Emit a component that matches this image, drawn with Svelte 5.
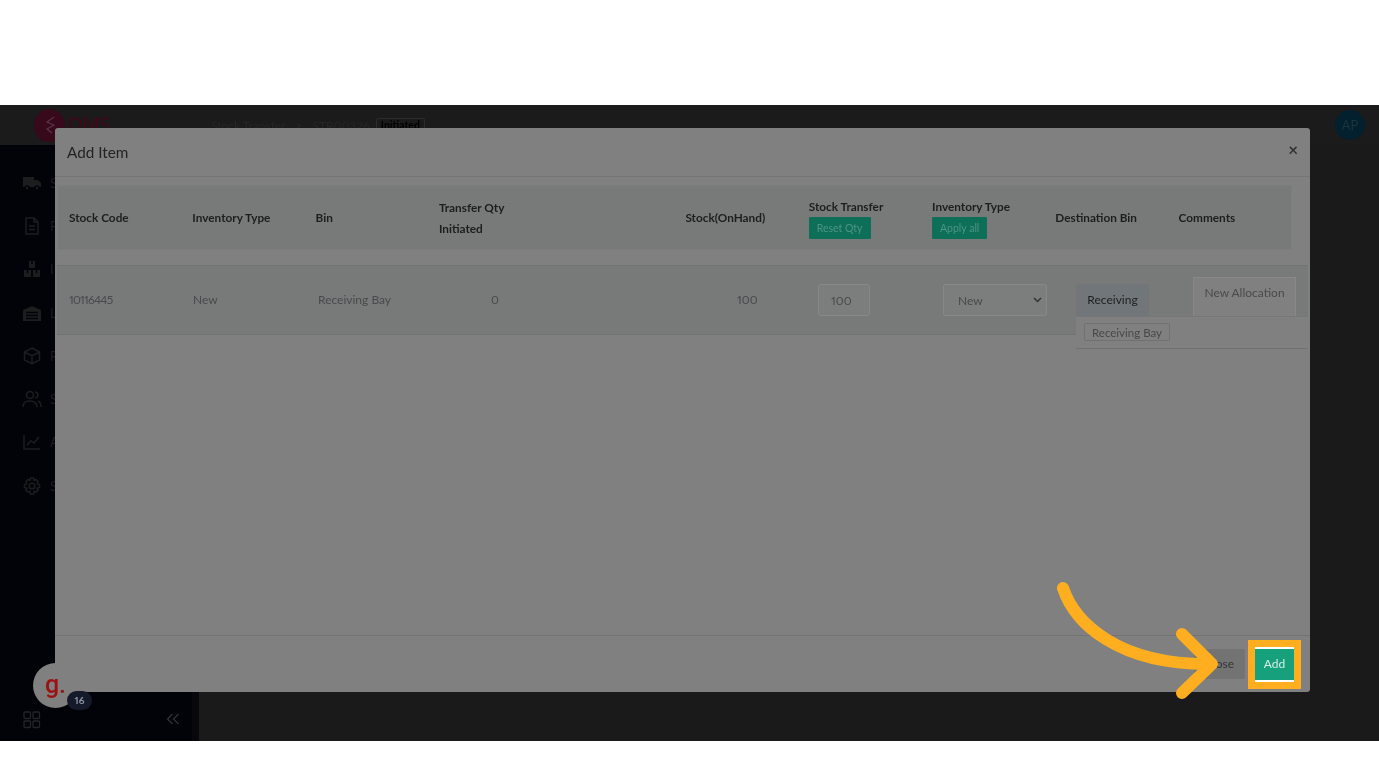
<script>
    const headers = [
        { label: "Stock Code" },
        { label: "Inventory Type" },
        { label: "Bin" },
        { label: "Transfer Qty Initiated", wide: true },
        { label: "Stock(OnHand)" },
        { label: "Stock Transfer", action: "Reset Qty" },
        { label: "Inventory Type", action: "Apply all" },
        { label: "Destination Bin" },
        { label: "Comments" }
    ];

    const navIcons = [
        { y: "truck", letter: "S" },
        { y: "file", letter: "P" },
        { y: "boxes", letter: "I" },
        { y: "store", letter: "L" },
        { y: "cube", letter: "R" },
        { y: "users", letter: "S" },
        { y: "chart", letter: "A" },
        { y: "gear", letter: "S" }
    ];
</script>

<div class="page">
    <div class="stage">
        <header class="topbar">
            <div class="logo">
                <span class="logo-mark">
                    <svg width="14" height="20" viewBox="0 0 14 20" fill="none" stroke="#5a3244" stroke-width="1.300">
                        <path d="M11 2L4 7l7 3-7 4 5 4" />
                    </svg>
                </span>
                <span class="logo-text">OMS</span>
            </div>
            <div class="crumbs">
                <span>Stock Transfer</span>
                <span>&gt;</span>
                <span>STR00326</span>
                <span class="status">Initiated</span>
            </div>
            <div class="avatar">AP</div>
        </header>

        <aside class="sidebar">
            <div class="nav">
                {#each navIcons as item}
                    <div class="nav-item">
                        <svg width="20" height="20" viewBox="0 0 20 20" fill="none" stroke="#1d1d20" stroke-width="1.500">
                            {#if item.y === "truck"}
                                <path d="M1 4h11v10H1zM12 7h4l3 3v4h-7z" fill="#1d1d20" stroke="none" />
                                <circle cx="5" cy="15" r="2" fill="#1d1d20" stroke="#020308" />
                                <circle cx="15" cy="15" r="2" fill="#1d1d20" stroke="#020308" />
                            {:else if item.y === "file"}
                                <path d="M4 2h8l4 4v12H4zM12 2v4h4M7 10h6M7 13.500h6" />
                            {:else if item.y === "boxes"}
                                <path d="M7 2h6v7H7zM2 11h7v7H2zM11 11h7v7h-7z" fill="#1d1d20" stroke="none" />
                                <path d="M10 2v3M5.500 11v3M14.500 11v3" stroke="#020308" />
                            {:else if item.y === "store"}
                                <path d="M1 7l9-4 9 4v11H1z" fill="#1d1d20" stroke="none" />
                                <path d="M4 9.500h12M4 12.500h12M4 15.500h12" stroke="#020308" />
                            {:else if item.y === "cube"}
                                <path d="M10 2l7.500 4v8L10 18l-7.500-4V6zM2.500 6l7.500 4 7.500-4M10 10v8" />
                            {:else if item.y === "users"}
                                <circle cx="8" cy="6" r="3.500" />
                                <path d="M1 18c0-4 3-6 7-6s7 2 7 6M13 3c2 .3 3 1.500 3 3s-1 2.700-3 3M16 12c2 1 3 3 3 6" />
                            {:else if item.y === "chart"}
                                <path d="M2 3v14h16M5 13l4-4 3 2 5-6" />
                            {:else}
                                <circle cx="10" cy="10" r="2.800" />
                                <path d="M8.500 2h3l.5 2.500 2-1 2.200 2.200-1.200 2 2.500.8v3l-2.500.7 1.200 2-2.200 2.200-2-1.100-.5 2.700h-3l-.6-2.700-2 1.100-2.100-2.200 1.100-2-2.400-.7v-3l2.400-.8-1.100-2 2.100-2.200 2 1z" />
                            {/if}
                        </svg>
                        <span class="nav-letter">{item.letter}</span>
                    </div>
                {/each}
            </div>
            <div class="side-foot">
                <svg width="18" height="18" viewBox="0 0 18 18" fill="none" stroke="#242428" stroke-width="1.300">
                    <rect x="1" y="1" width="6.500" height="6.500" rx="1" />
                    <rect x="10" y="1" width="6.500" height="6.500" rx="1" />
                    <rect x="1" y="10" width="6.500" height="6.500" rx="1" />
                    <rect x="10" y="10" width="6.500" height="6.500" rx="1" />
                </svg>
                <svg class="collapse" width="14" height="12" viewBox="0 0 14 12" fill="none" stroke="#303136" stroke-width="1.300">
                    <path d="M6.500 1L1.500 6l5 5M12.500 1l-5 5 5 5" />
                </svg>
            </div>
        </aside>

        <section class="modal">
            <div class="modal-head">
                <h2>Add Item</h2>
                <span class="close">×</span>
            </div>

            <div class="modal-body">
                <div class="table-head">
                    {#each headers as col}
                        <div class="th" class:wide={col.wide} class:has-action={col.action}>
                            <span>{col.label}</span>
                            {#if col.action}
                                <span class="mini-btn">{col.action}</span>
                            {/if}
                        </div>
                    {/each}
                </div>

                <div class="table-row">
                    <div class="td code">10116445</div>
                    <div class="td type">New</div>
                    <div class="td bin">Receiving Bay</div>
                    <div class="td initiated">0</div>
                    <div class="td onhand">100</div>
                    <div class="field qty">100</div>
                    <div class="field select">
                        <span>New</span>
                        <svg width="9" height="6" viewBox="0 0 9 6" fill="none" stroke="#333" stroke-width="1.500">
                            <path d="M1 1l3.500 3.500L8 1" />
                        </svg>
                    </div>
                    <div class="dest-tab">Receiving</div>
                    <div class="comment">New Allocation</div>
                    <div class="dest-panel">
                        <span class="chip">Receiving Bay</span>
                    </div>
                </div>
            </div>

            <div class="modal-foot">
                <span class="btn close-btn">Close</span>
                <span class="add-ring"><span class="btn add-btn">Add</span></span>
            </div>
        </section>

        <div class="widget">
            <span class="widget-g">g.</span>
            <span class="widget-count">16</span>
        </div>

        <svg class="arrow" width="180" height="130" viewBox="0 0 180 130" fill="none" stroke="#ffae1f" stroke-width="12" stroke-linecap="round" stroke-linejoin="round">
            <path d="M10 10C22 46 66 86 154 86" />
            <path d="M129 56L159 86L129 115" />
        </svg>
    </div>
</div>

<style>
    :global(body) {
        margin: 0;
        background: #fff;
    }

    .page {
        height: 776px;
        padding-top: 105px;
        box-sizing: border-box;
        font-family: Lato, "Open Sans", sans-serif;
        font-variant-numeric: proportional-nums;
    }

    .stage {
        position: relative;
        height: 636px;
        display: flex;
        flex-direction: column;
        background: #1a1a1a;
        overflow: hidden;
        filter: blur(0.45px);
    }

    .topbar {
        height: 40px;
        flex: none;
        display: flex;
        align-items: center;
        padding: 0 14px 0 34px;
        background: #1b1b1b;
        box-sizing: border-box;
    }

    .logo {
        width: 177px;
        display: flex;
        align-items: center;
        gap: 3px;
    }

    .logo-mark {
        width: 31px;
        height: 33px;
        border-radius: 50%;
        display: flex;
        align-items: center;
        justify-content: center;
        background: #38081b;
    }

    .logo-text {
        margin-top: -2px;
        font-size: 18px;
        font-weight: 700;
        color: #3a0a18;
    }

    .crumbs {
        flex: 1;
        display: flex;
        align-items: center;
        gap: 10px;
        font-size: 12px;
        color: #262626;
    }

    .status {
        margin-left: -4px;
        padding: 0 4px;
        border: 1px solid #2c2c2c;
        border-radius: 2px;
        font-size: 10.500px;
        font-weight: 700;
        color: #000;
    }

    .avatar {
        width: 30px;
        height: 30px;
        border-radius: 50%;
        display: flex;
        align-items: center;
        justify-content: center;
        background: #03202e;
        color: #1a3440;
        font-size: 13px;
    }

    .sidebar {
        width: 199px;
        flex: 1;
        box-sizing: border-box;
        display: flex;
        flex-direction: column;
        background: #020308;
        border-right: 7px solid #08080c;
    }

    .nav {
        flex: 1;
        padding: 26px 0 0 22px;
    }

    .nav-item {
        height: 43.300px;
        display: flex;
        align-items: center;
        gap: 8px;
        box-sizing: border-box;
        padding-bottom: 20px;
    }

    .nav-letter {
        font-size: 13px;
        color: #1d1d20;
    }

    .side-foot {
        height: 30px;
        padding: 0 12px 0 23px;
        display: flex;
        align-items: flex-start;
        justify-content: space-between;
    }

    .collapse {
        margin-top: 2px;
    }

    .modal {
        position: absolute;
        left: 55px;
        top: 23px;
        width: 1255px;
        height: 564px;
        display: flex;
        flex-direction: column;
        background: #808080;
        border-radius: 3px;
        color: #1c1c1c;
    }

    .modal-head {
        height: 49px;
        flex: none;
        display: flex;
        justify-content: space-between;
        align-items: center;
        padding: 0 12px;
        box-sizing: border-box;
        border-bottom: 1px solid #757575;
    }

    .modal-head h2 {
        margin: 0;
        font-size: 15.300px;
        font-weight: 400;
        color: #222;
    }

    .close {
        margin-top: -5px;
        font-size: 17px;
        font-weight: 700;
        color: #333;
    }

    .modal-body {
        flex: 1;
        padding: 8px 2px 0;
    }

    .table-head {
        width: 1235px;
        height: 65px;
        display: grid;
        grid-template-columns: repeat(3, 123.300px) 246.500px repeat(5, 123.300px);
        align-items: center;
        padding-left: 11px;
        box-sizing: border-box;
        background: #787a7a;
        border: 1px solid #7c7d7d;
    }

    .th {
        font-size: 11.800px;
        font-weight: 700;
        color: #1d1d1d;
        display: flex;
        flex-direction: column;
        align-items: flex-start;
    }

    .th.wide {
        width: 76px;
        line-height: 21px;
    }

    .th.has-action {
        line-height: 20px;
    }

    .mini-btn {
        padding: 0 8px;
        height: 22px;
        line-height: 22px;
        border-radius: 1px;
        background: #0d6f57;
        color: #4d9583;
        font-size: 10.500px;
        font-weight: 400;
    }

    .table-row {
        position: relative;
        width: 1251px;
        height: 70px;
        margin-top: 15px;
        box-sizing: border-box;
        background: #787a7a;
        border-top: 1px solid #717272;
        border-bottom: 1px solid #717272;
        font-size: 12px;
        color: #484a4b;
    }

    .td {
        position: absolute;
        top: 26px;
    }

    .code { left: 12px; letter-spacing: -0.800px; }
    .type { left: 136px; }
    .bin { left: 261px; }
    .initiated { left: 434px; }
    .onhand { left: 680px; }

    .field {
        position: absolute;
        top: 18px;
        height: 32px;
        box-sizing: border-box;
        display: flex;
        align-items: center;
        background: #7c7e7e;
        border: 1px solid #85878a;
        border-radius: 2px;
    }

    .qty {
        left: 761px;
        width: 52px;
        padding-left: 12px;
    }

    .select {
        left: 886px;
        width: 104px;
        padding: 0 4px 0 14px;
        justify-content: space-between;
    }

    .dest-tab {
        position: absolute;
        left: 1019px;
        top: 18px;
        width: 73px;
        height: 32px;
        line-height: 32px;
        text-align: center;
        box-sizing: border-box;
        background: #71767b;
        border-radius: 2px 2px 0 0;
        color: #1f1f1f;
    }

    .comment {
        position: absolute;
        left: 1136px;
        top: 11px;
        width: 103px;
        height: 39px;
        padding-top: 7px;
        text-align: center;
        box-sizing: border-box;
        background: #808080;
        border: 1px solid #888;
        border-bottom: none;
        color: #4a4a4a;
    }

    .dest-panel {
        position: absolute;
        left: 1019px;
        top: 50px;
        width: 232px;
        height: 33px;
        padding: 6px 8px;
        display: flex;
        align-items: flex-start;
        box-sizing: border-box;
        background: #808080;
        border-bottom: 1px solid #707070;
        border-top: 1px solid #777;
    }

    .chip {
        height: 18px;
        line-height: 17px;
        padding: 0 7px;
        box-sizing: border-box;
        border: 1px solid #717171;
        border-radius: 2px;
        font-size: 11.500px;
        color: #484848;
    }

    .modal-foot {
        height: 57px;
        flex: none;
        display: flex;
        justify-content: flex-end;
        align-items: center;
        gap: 3px;
        padding-right: 9px;
        box-sizing: border-box;
        border-top: 1px solid #737373;
    }

    .btn {
        font-size: 12px;
    }

    .close-btn {
        height: 30px;
        line-height: 30px;
        padding: 0 11px;
        background: #737373;
        border-radius: 2px;
        color: #333;
    }

    .add-ring {
        padding: 7px;
        background: #ffae1f;
    }

    .add-btn {
        display: block;
        width: 39px;
        height: 35px;
        line-height: 33px;
        text-align: center;
        background: #16a07c;
        color: #d4efe7;
        box-shadow: inset 0 2px 0 #fff, inset 0 -2px 0 #fff;
    }

    .widget {
        position: absolute;
        left: 33px;
        top: 558px;
        width: 45px;
        height: 45px;
        border-radius: 50%;
        background: #808080;
        display: flex;
        align-items: center;
        justify-content: center;
    }

    .widget-g {
        margin-top: -3px;
        font-size: 25px;
        font-weight: 500;
        color: #9c1212;
        font-family: Roboto, sans-serif;
    }

    .widget-count {
        position: absolute;
        left: 34px;
        top: 28px;
        width: 25px;
        height: 19px;
        line-height: 19px;
        border-radius: 10px;
        text-align: center;
        background: #141a2a;
        color: #8c93a8;
        font-size: 10px;
        font-weight: 700;
    }

    .arrow {
        position: absolute;
        left: 1053px;
        top: 473px;
    }
</style>
